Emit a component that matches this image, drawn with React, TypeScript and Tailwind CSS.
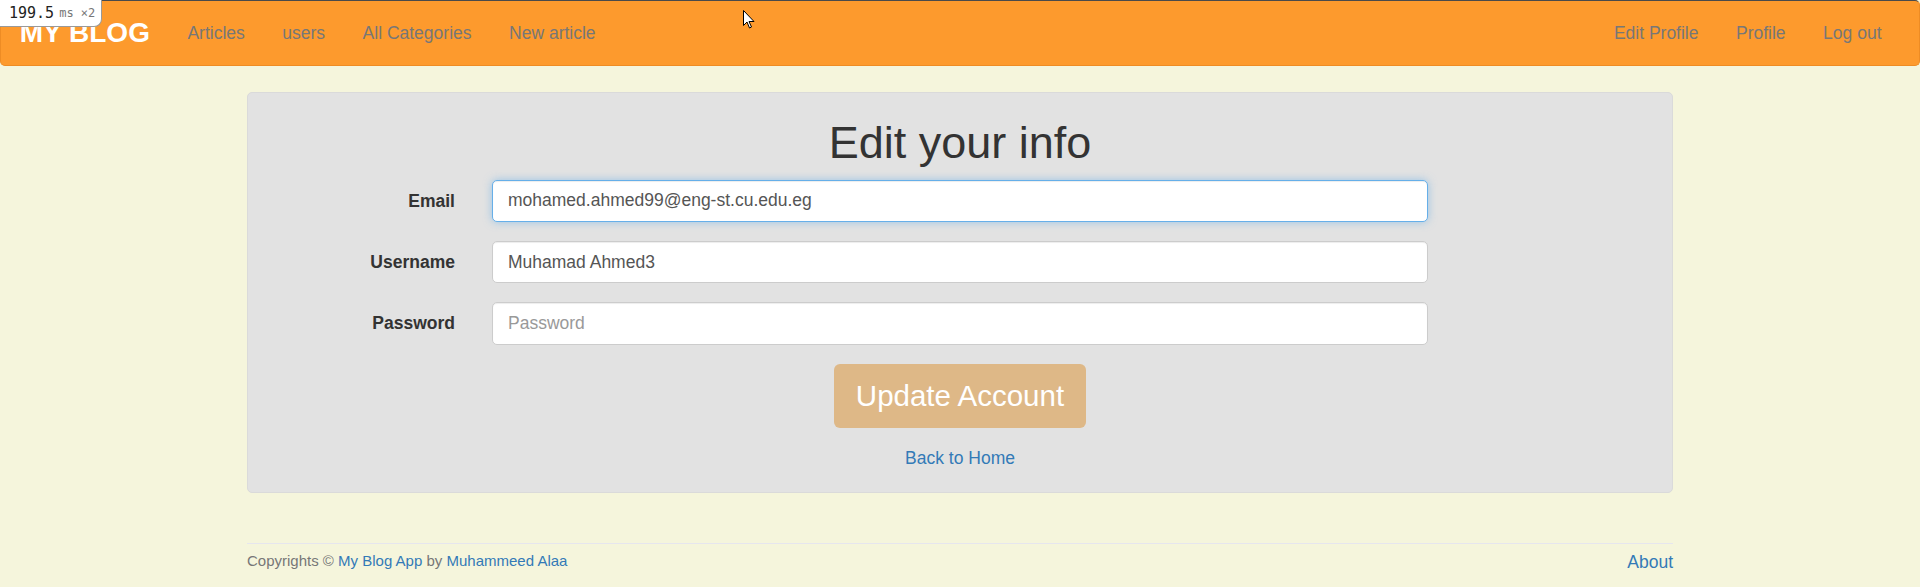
import { useState } from 'react';

const leftLinks = ['Articles', 'users', 'All Categories', 'New article'];
const rightLinks = ['Edit Profile', 'Profile', 'Log out'];

function NavBar() {
  return (
    <nav className="flex h-[66px] items-center justify-between rounded-[5px] border border-t-[#4a4a4a] border-x-[#ee8c24] border-b-[#ee8c24] bg-[#fd9a2d] px-[18.75px]">
      <div className="flex items-center">
        <a href="#" className="pr-[18.75px] text-[28px] font-bold leading-none text-white">
          MY BLOG
        </a>
        {leftLinks.map((l) => (
          <a key={l} href="#" className="px-[18.75px] text-[17.5px] text-[#777]">
            {l}
          </a>
        ))}
      </div>
      <div className="flex items-center">
        {rightLinks.map((l) => (
          <a key={l} href="#" className="px-[18.75px] text-[17.5px] text-[#777]">
            {l}
          </a>
        ))}
      </div>
    </nav>
  );
}

interface RowProps {
  label: string;
  value: string;
  placeholder?: string;
  type?: string;
  focused?: boolean;
}

function FormRow({ label, value, placeholder, type = 'text', focused }: RowProps) {
  const [v, setV] = useState(value);
  return (
    <div className="flex items-center">
      <label className="w-[207px] shrink-0 text-right text-[17.5px] font-bold text-[#333]">{label}</label>
      <input
        type={type}
        value={v}
        placeholder={placeholder}
        onChange={(e) => setV(e.target.value)}
        className={
          focused
            ? 'ml-[37px] h-[42.5px] w-[936px] rounded-[5px] border border-[#66afe9] bg-white px-[15px] text-[17.5px] text-[#555] shadow-[inset_0_1px_1px_rgba(0,0,0,0.075),0_0_8px_rgba(102,175,233,0.6)] outline-none'
            : 'ml-[37px] h-[42.5px] w-[936px] rounded-[5px] border border-[#ccc] bg-white px-[15px] text-[17.5px] text-[#555] shadow-[inset_0_1px_1px_rgba(0,0,0,0.075)] outline-none placeholder:text-[#999]'
        }
      />
    </div>
  );
}

export default function App() {
  return (
    <div className="relative min-h-screen bg-[#f5f5dc] font-['Liberation_Sans',Arial,sans-serif] text-[#333]">
      <NavBar />

      <main className="mx-auto mt-[26px] w-[1426px]">
        <div className="flex flex-col rounded-[5px] border border-[#dadada] bg-[#e2e2e2] pb-[21px] pt-[25px]">
          <h1 className="mb-[12px] text-center text-[45px] leading-[49.5px] text-[#333]">Edit your info</h1>
          <div className="flex flex-col gap-[18.75px]">
            <FormRow label="Email" value="mohamed.ahmed99@eng-st.cu.edu.eg" type="email" focused />
            <FormRow label="Username" value="Muhamad Ahmed3" />
            <FormRow label="Password" value="" placeholder="Password" type="password" />
          </div>
          <button className="mt-[19.5px] h-[64px] self-center rounded-[6px] bg-[#deb887] px-[22px] text-[29.5px] leading-none text-white">
            Update Account
          </button>
          <a href="#" className="mt-[17.5px] self-center text-[17.5px] leading-[25px] text-[#337ab7]">
            Back to Home
          </a>
        </div>

        <footer className="mt-[50px] border-t border-[#e6e6ee] pt-[6px]">
          <div className="flex items-start justify-between">
            <p className="text-[15px] leading-[21px] text-[#777]">
              Copyrights © <a href="#" className="text-[#337ab7]">My Blog App</a> by{' '}
              <a href="#" className="text-[#337ab7]">Muhammeed Alaa</a>
            </p>
            <a href="#" className="text-[17.5px] leading-[25px] text-[#337ab7]">
              About
            </a>
          </div>
        </footer>
      </main>

      {/* devtools timing badge */}
      <div className="absolute left-0 top-0 flex h-[27px] w-[102px] items-center gap-[5px] rounded-br-[8px] border-b border-r border-[#999] bg-white pl-[9px] font-['DejaVu_Sans_Mono',monospace]">
        <span className="text-[15px] text-[#222]">199.5</span>
        <span className="text-[12px] text-[#777]">ms ×2</span>
      </div>

      {/* mouse cursor */}
      <svg className="absolute left-[743px] top-[10px]" width="12" height="19" viewBox="0 0 12 19">
        <path d="M0.5 0.5 L0.5 15.5 L4 12 L6.5 18 L8.5 17 L6 11.5 L11 11.5 Z" fill="white" stroke="black" strokeWidth="1" />
      </svg>
    </div>
  );
}
